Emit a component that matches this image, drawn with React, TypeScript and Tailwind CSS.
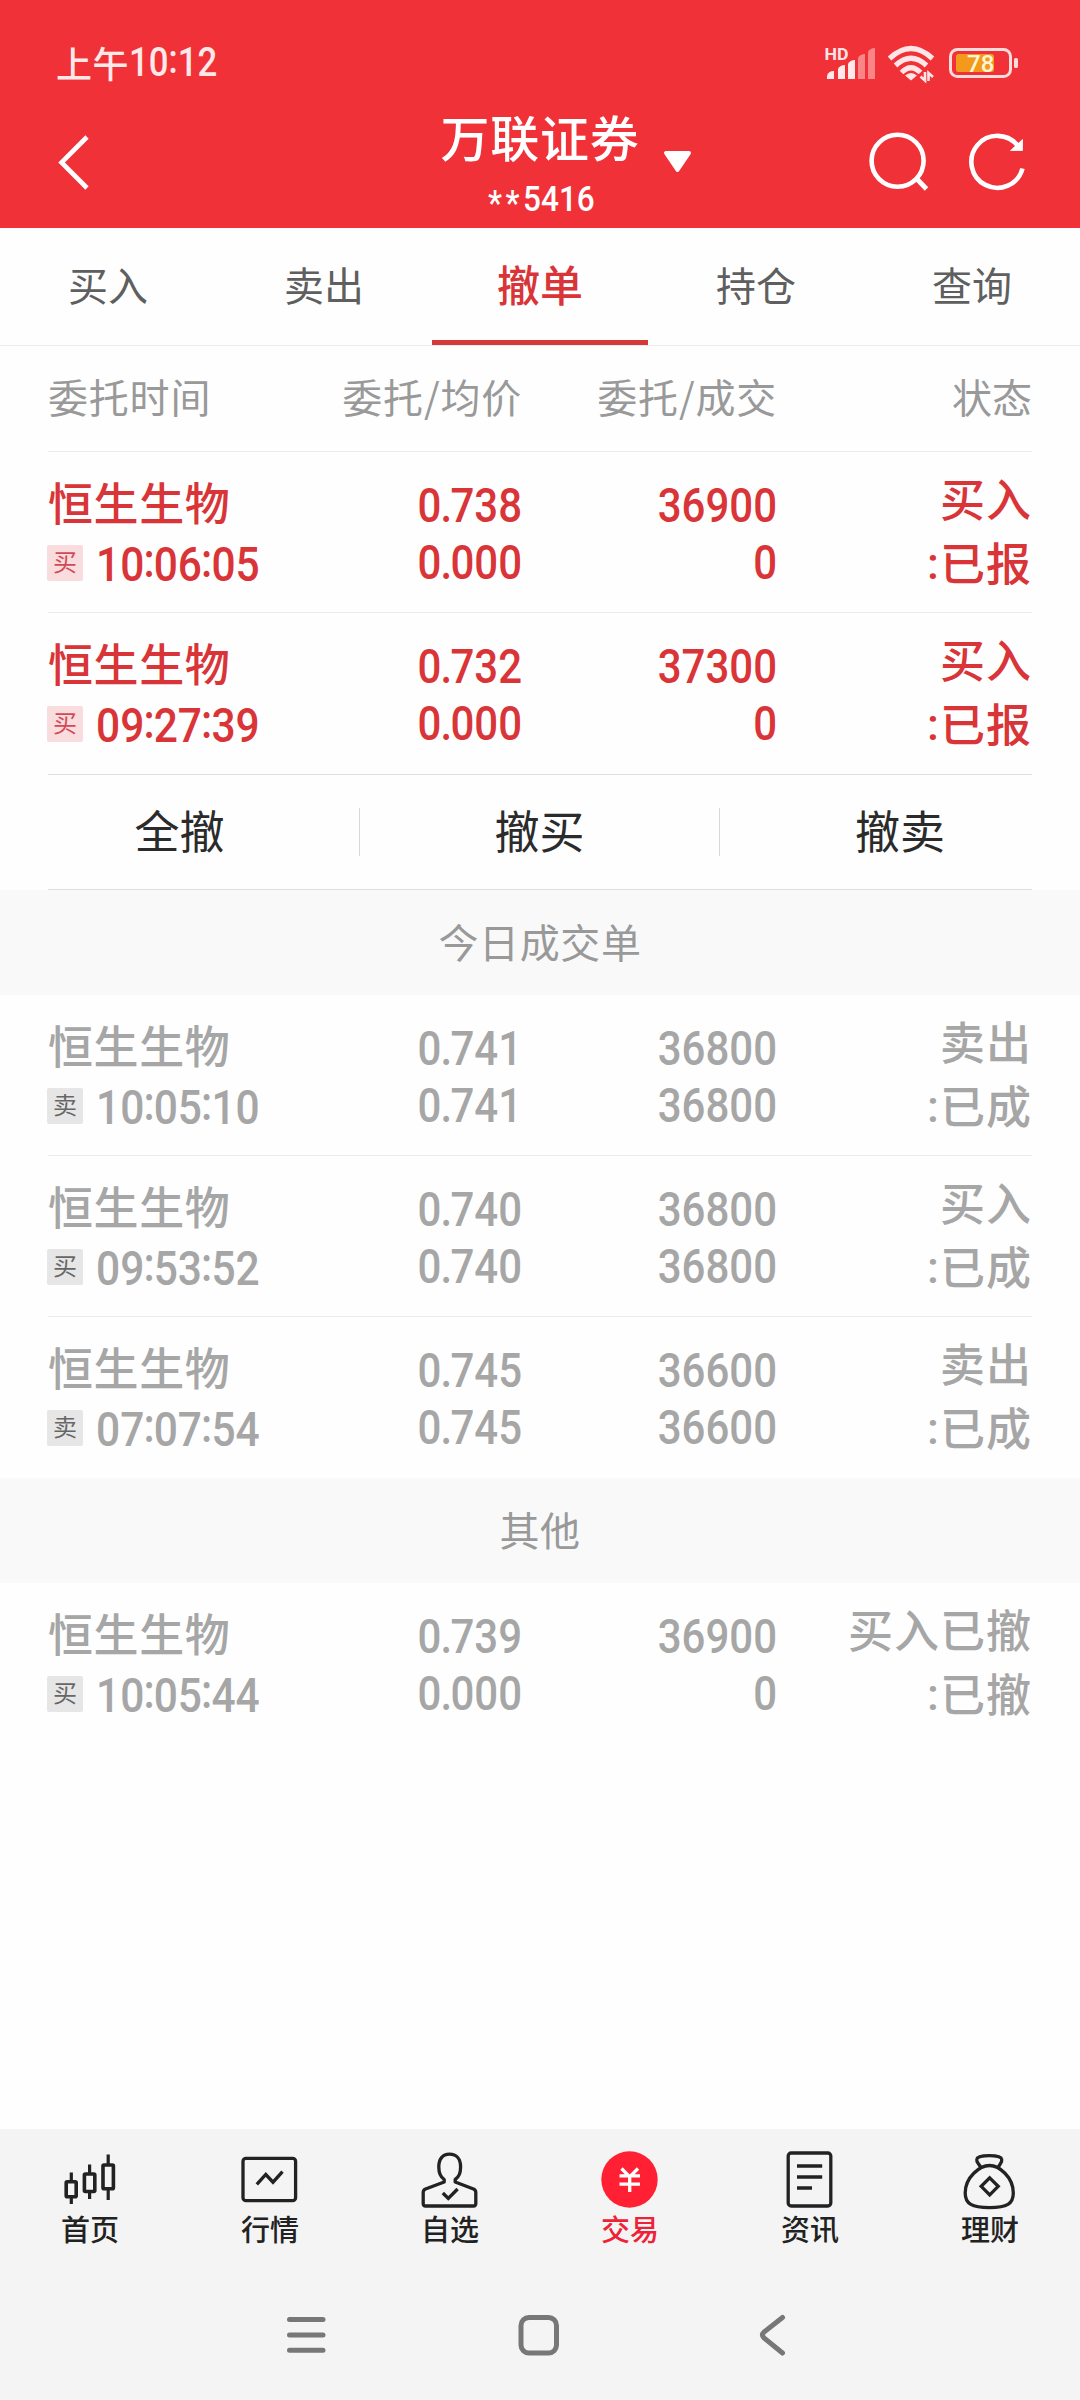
import type { ReactNode } from "react";

type Order = {
  side: "买" | "卖";
  time: string;
  price: string;
  avg: string;
  qty: string;
  filled: string;
  action: string;
  state: string;
};

const pending: Order[] = [
  { side: "买", time: "10:06:05", price: "0.738", avg: "0.000", qty: "36900", filled: "0", action: "买入", state: "已报" },
  { side: "买", time: "09:27:39", price: "0.732", avg: "0.000", qty: "37300", filled: "0", action: "买入", state: "已报" },
];

const filledToday: Order[] = [
  { side: "卖", time: "10:05:10", price: "0.741", avg: "0.741", qty: "36800", filled: "36800", action: "卖出", state: "已成" },
  { side: "买", time: "09:53:52", price: "0.740", avg: "0.740", qty: "36800", filled: "36800", action: "买入", state: "已成" },
  { side: "卖", time: "07:07:54", price: "0.745", avg: "0.745", qty: "36600", filled: "36600", action: "卖出", state: "已成" },
];

const others: Order[] = [
  { side: "买", time: "10:05:44", price: "0.739", avg: "0.000", qty: "36900", filled: "0", action: "买入已撤", state: "已撤" },
];

/* Condensed numerals; colons are raised to the middle of the digits */
function Num({ children, left = false }: { children: string; left?: boolean }) {
  return (
    <span
      className={
        (left ? "origin-left scale-x-[0.885] " : "origin-right scale-x-[0.875] ") +
        "block whitespace-nowrap font-['Roboto',sans-serif] text-[48px] font-medium"
      }
    >
      {children.split(/([.:])/).map((part, i) =>
        part === ":" ? (
          <span key={i} className="relative -top-[4px] -mx-[1px]">:</span>
        ) : part === "." ? (
          <span key={i} className="-ml-[1px] -mr-[2px]">.</span>
        ) : (
          part
        ),
      )}
    </span>
  );
}

function OrderRow({ order, live = false }: { order: Order; live?: boolean }) {
  return (
    <div
      className={
        (live ? "text-[#d93538] " : "text-[#a6a6a6] ") +
        "grid h-[161px] grid-cols-[220px_254px_255px_255px] text-[45px] font-medium tracking-[0.6px]"
      }
    >
      <div className="pt-[20px]">
        <div className="h-[60px] whitespace-nowrap leading-[60px]">恒生生物</div>
        <div className="-ml-px flex h-[61px] items-center">
          <span
            className={
              (live ? "bg-[#f9dcde] text-[#d24a55] " : "bg-[#e6e6e6] text-[#666] ") +
              "flex h-9 w-9 shrink-0 items-center justify-center rounded-[2px] pb-[3px] text-[24px] leading-none font-normal tracking-normal"
            }
          >
            {order.side}
          </span>
          <div className="ml-[13px] pt-[4px] leading-[58px] tracking-normal">
            <Num left>{order.time}</Num>
          </div>
        </div>
      </div>
      <div className="pt-[25px] text-right leading-[57px] tracking-normal">
        <Num>{order.price}</Num>
        <Num>{order.avg}</Num>
      </div>
      <div className="pt-[25px] text-right leading-[57px] tracking-normal">
        <Num>{order.qty}</Num>
        <Num>{order.filled}</Num>
      </div>
      <div className="pt-[14px] text-right leading-[64px] tracking-[1px] whitespace-nowrap">
        <div>{order.action}</div>
        <div>
          <span className="relative -top-[2px] font-['Roboto',sans-serif]">:</span>
          {order.state}
        </div>
      </div>
    </div>
  );
}

function OrderList({ orders, live = false }: { orders: Order[]; live?: boolean }) {
  return (
    <div className="mx-12 divide-y divide-[#ececec]">
      {orders.map((o) => (
        <OrderRow key={o.time} order={o} live={live} />
      ))}
    </div>
  );
}

function Band({ children }: { children: ReactNode }) {
  return (
    <div className="flex h-[105px] items-center justify-center bg-[#f9f9f9] pb-[4px] text-[40px] tracking-[0.6px] text-[#999]">
      {children}
    </div>
  );
}

function StatusIcons() {
  return (
    <svg width="200" height="50" viewBox="820 38 200 50" fill="none">
      <text x="824.5" y="59.5" fontSize="16" fontWeight="700" fill="#ffe4e4" fontFamily="Roboto" textLength="24" lengthAdjust="spacingAndGlyphs">HD</text>
      <g fill="#ffe9e9">
        <path d="M827 79V76Q828 71 834 71V79Z" />
        <path d="M838 79V69Q840 65 845 65V79Z" />
        <path d="M848 79V64Q850 60 855 60V79Z" />
      </g>
      <g fill="#f98587">
        <path d="M858 79V58Q860 54 865 54V79Z" />
        <path d="M868 79V52Q870 48 875 48V79Z" />
      </g>
      <g stroke="#ffe6e6" strokeWidth="5.2">
        <path d="M889.5 58.5Q911 38.5 932.5 58.5" />
        <path d="M895.5 65.5Q911 51 926.5 65.5" />
        <path d="M901.5 72.5Q911 63 920.5 72.5" />
      </g>
      <path d="M911 80.500L905 75.500Q911 70.500 917 75.500Z" fill="#ffe6e6" />
      <path d="M925 72V80.500L920.500 76.500M928.500 81V73L933 77" stroke="#ffe6e6" strokeWidth="2.600" />
      <rect x="950.500" y="49.500" width="60" height="27" rx="7" stroke="#ffdcdc" strokeWidth="3" />
      <rect x="1014" y="58" width="4" height="10" rx="1.500" fill="#ffdcdc" />
      <rect x="956" y="54" width="38" height="18" rx="2.500" fill="#f39a1c" />
      <text x="967" y="71.500" fontSize="24" fontWeight="500" fill="#fff6d8" fontFamily="Roboto">78</text>
    </svg>
  );
}

function Header() {
  return (
    <header className="h-[228px] bg-[#f03138] text-white">
      <div className="flex h-[88px] items-end justify-between pr-[60px] pl-[56px]">
        <div className="flex h-[50px] items-center text-[36px] font-medium text-[#ffe8e8]">
          <span className="pb-[3px] tracking-[0.6px]">上午</span>
          <span className="origin-left scale-x-[0.87] font-['Roboto',sans-serif] text-[40px]">
            10<span className="relative -top-[3px]">:</span>12
          </span>
        </div>
        <StatusIcons />
      </div>
      <div className="grid h-[140px] grid-cols-[1fr_260px_1fr]">
        <svg className="mt-[44px] ml-[54px]" width="40" height="60" viewBox="54 132 40 60" fill="none">
          <path d="M87 137L61.500 162.500L87 188" stroke="#fff" strokeWidth="4.600" />
        </svg>
        <div className="flex flex-col items-center">
          <div className="relative mt-[16px] text-[49px] leading-[64px] font-medium tracking-[0.8px] whitespace-nowrap">
            万联证券
            <svg className="absolute top-[45px] left-[222px]" width="32" height="28" viewBox="0 0 32 28">
              <path d="M4 4H27L15.500 21Z" fill="#fff" stroke="#fff" strokeWidth="4" strokeLinejoin="round" />
            </svg>
          </div>
          <div className="mt-[10px] ml-[3px] flex scale-x-[0.9] font-['Roboto',sans-serif] text-[35px] leading-[44px] font-medium">
            <span className="pt-[4px] tracking-[4px]">**</span>
            <span>5416</span>
          </div>
        </div>
        <svg className="mt-[38px] ml-auto mr-[45px]" width="170" height="70" viewBox="865 126 170 70" fill="none" stroke="#fff">
          <circle cx="897.600" cy="160.700" r="26" strokeWidth="4.600" />
          <path d="M915.500 177.500L926.500 189" strokeWidth="4.800" />
          <path d="M1022.500 168.500A26 26 0 1 1 1018 146" strokeWidth="4.600" />
          <path d="M1022.500 139.500V150.500H1010.500Z" fill="#fff" strokeWidth="0.800" />
        </svg>
      </div>
    </header>
  );
}

function Tabs() {
  return (
    <nav className="grid h-[118px] grid-cols-5 border-b border-[#ececec] text-center text-[40px] leading-[112px] text-[#5f5f5f]">
      {["买入", "卖出", "撤单", "持仓", "查询"].map((t) =>
        t === "撤单" ? (
          <div key={t} className="h-[117px] border-b-[5px] border-[#d33a38] text-[43px] leading-[111px] font-medium text-[#d93538]">
            {t}
          </div>
        ) : (
          <div key={t}>{t}</div>
        ),
      )}
    </nav>
  );
}

function Candles() {
  return (
    <>
      <g strokeWidth="3.600">
        <rect x="6.200" y="31.800" width="10" height="15" rx="1" />
        <rect x="24.400" y="24" width="10.400" height="17.500" rx="1" />
        <rect x="43" y="15" width="10.400" height="23.800" rx="1" />
      </g>
      <path strokeWidth="3.200" d="M11.300 22.500V31M11.300 48V54M29.600 14.500V23M29.600 42V49M48.200 4.500V14M48.200 40V50" />
    </>
  );
}

const bottomTabs: { label: string; icon: ReactNode }[] = [
  { label: "首页", icon: <Candles /> },
  {
    label: "行情",
    icon: (
      <>
        <rect x="3" y="8.300" width="52.600" height="42.400" rx="3" />
        <path d="M16.800 34.300L25.800 24.500L33 32.200L42.500 21.700" />
      </>
    ),
  },
  {
    label: "自选",
    icon: (
      <>
        <path
          strokeLinejoin="round"
          d="M24.200 32V29.500C20.500 27 18.800 22.500 18.800 17C18.800 9 22.500 4.200 29.500 4.200C36.500 4.200 40.600 9 40.600 17C40.600 22.500 39 27 35.200 29.500V32L53.500 39Q55.800 40 55.800 42.500V53.500Q55.800 56 53.500 56H5.500Q3.200 56 3.200 53.500V42.500Q3.200 40 5.500 39Z"
        />
        <path d="M22.800 43L28.300 48.500L37.600 39" />
      </>
    ),
  },
  {
    label: "交易",
    icon: (
      <>
        <circle cx="29.500" cy="29.500" r="28.200" fill="#ff2133" stroke="none" />
        <path stroke="#fff" d="M21.500 18.500L29.700 27L38 18.500M19.500 25.800H40M19.500 34.200H40M29.700 26V42" />
      </>
    ),
  },
  {
    label: "资讯",
    icon: (
      <>
        <rect x="8.200" y="3" width="42.600" height="53" rx="3" />
        <path d="M17 16H42.200M17 27H42.200M17 38H32" />
      </>
    ),
  },
  {
    label: "理财",
    icon: (
      <>
        <path d="M29.500 15.500C39 15.500 53.300 27 53.300 43C53.300 54 47 57.600 29.500 57.600C12 57.600 5.200 54 5.200 43C5.200 27 20 15.500 29.500 15.500Z" />
        <path strokeLinejoin="round" d="M21 18C19.500 13.500 16 13 16.800 9C17.500 4.500 41 4.500 41.700 9C42.500 13 39.500 13.500 38 18" />
        <path d="M29.700 27.800L38.200 36.300L29.700 44.800L21.200 36.300Z" />
      </>
    ),
  },
];

function BottomBar() {
  return (
    <footer className="h-[271px] bg-[#f4f4f4]">
      <div className="grid h-[142px] grid-cols-6 pt-[21px]">
        {bottomTabs.map(({ label, icon }) => (
          <div
            key={label}
            className={
              (label === "交易" ? "text-[#ee2136] " : "text-[#222] ") +
              "flex flex-col items-center text-[29px] leading-[36px] font-medium"
            }
          >
            <svg width="60" height="60" viewBox="0 0 60 60" fill="none" stroke="#222" strokeWidth="3.300">
              {icon}
            </svg>
            <span>{label}</span>
          </div>
        ))}
      </div>
      <div className="flex h-[128px] items-center pl-[286px]">
        <svg width="40" height="44" viewBox="0 0 40 44" fill="none" stroke="#777" strokeWidth="5" strokeLinecap="round">
          <path d="M3.500 6.500H37M3.500 22H37M3.500 37.300H37" />
        </svg>
        <svg className="ml-[191px]" width="44" height="44" viewBox="0 0 44 44" fill="none" stroke="#777" strokeWidth="5">
          <rect x="4" y="4.500" width="35.500" height="35.500" rx="8" />
        </svg>
        <svg className="ml-[195px]" width="34" height="44" viewBox="0 0 34 44" fill="none" stroke="#777" strokeWidth="5" strokeLinecap="round">
          <path d="M26.500 4.500L8 19Q5 22 8 25L26.500 40" />
        </svg>
      </div>
    </footer>
  );
}

export default function App() {
  return (
    <div className="flex h-[2400px] w-[1080px] flex-col overflow-hidden bg-[#fefefe] font-['Noto_Sans_CJK_SC',sans-serif]">
      <Header />
      <Tabs />
      <div className="mx-12 grid h-[106px] grid-cols-[220px_254px_255px_255px] border-b border-[#ececec] text-[40px] leading-[101px] tracking-[0.8px] text-[#999]">
        <div>委托时间</div>
        <div className="text-right">委托/均价</div>
        <div className="text-right">委托/成交</div>
        <div className="text-right tracking-normal">状态</div>
      </div>
      <OrderList orders={pending} live />
      <div className="mx-12 border-y border-[#dedede]">
        <div className="-mx-12 grid h-[114px] grid-cols-3 text-center text-[45px] leading-[108px] text-[#2b2b2b]">
          {["全撤", "撤买", "撤卖"].map((a, i) => (
            <div key={a} className="flex items-center justify-center">
              <span className="flex-1 pb-[4px]">{a}</span>
              {i < 2 && <i className="h-12 w-px bg-[#d8d8d8]" />}
            </div>
          ))}
        </div>
      </div>
      <Band>今日成交单</Band>
      <OrderList orders={filledToday} />
      <Band>其他</Band>
      <OrderList orders={others} />
      <div className="flex-1" />
      <BottomBar />
    </div>
  );
}
